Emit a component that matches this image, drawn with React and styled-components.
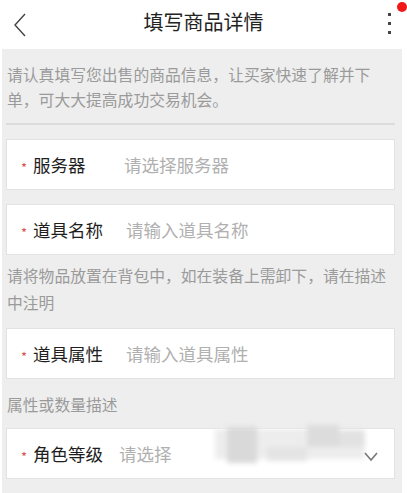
import React from 'react';
import styled, { createGlobalStyle } from 'styled-components';

const Global = createGlobalStyle`
    html, body {
        margin: 0;
        padding: 0;
        background: #fff;
        font-family: "Noto Sans CJK SC", "Noto Sans", sans-serif;
    }
`

const Page = styled.div`
    width: 407px;
    height: 493px;
    overflow: hidden;
    background: #fff;
`

const Header = styled.div`
    height: 49px;
    display: flex;
    align-items: center;
    justify-content: space-between;
    padding: 0 6px 0 12px;
    box-sizing: border-box;
    position: relative;
`

const Title = styled.div`
    position: absolute;
    left: 0;
    right: 0;
    top: 9px;
    text-align: center;
    font-size: 20px;
    line-height: 26px;
    color: #222;
    pointer-events: none;
`

const Menu = styled.div`
    position: relative;
    width: 24px;
    height: 36px;
    display: flex;
    flex-direction: column;
    align-items: center;
    justify-content: center;
    gap: 6px;
    margin-top: -3px;
`

const Dot = styled.span`
    width: 3px;
    height: 3px;
    background: #444;
`

const Badge = styled.span`
    position: absolute;
    top: -3px;
    right: -6px;
    width: 10px;
    height: 10px;
    border-radius: 50%;
    background: #f01818;
`

const Body = styled.div`
    margin: 0 5px 0 2px;
    background: #eeeeee;
    padding: 13px 7px 20px 4px;
    min-height: 444px;
    box-sizing: border-box;
`

const Note = styled.p`
    margin: ${p => p.$m || '0'};
    padding-left: 1px;
    font-size: 15.8px;
    line-height: ${p => p.$lh || 25}px;
    color: #9a9a9a;
`

const Divider = styled.div`
    height: 2px;
    background: #dcdcdc;
    margin: 11px 0 14px 0;
`

const Field = styled.div`
    position: relative;
    height: 51px;
    box-sizing: border-box;
    background: #fff;
    border: 1px solid #e2e2e2;
    display: flex;
    align-items: center;
    padding-left: 14px;
    margin-bottom: ${p => p.$mb || 0}px;
`

const Star = styled.span`
    color: #d9534f;
    font-size: 13px;
    line-height: 13px;
    width: 12px;
    margin-top: 6px;
`

const Label = styled.span`
    font-size: 17.5px;
    color: #1e1e1e;
    min-width: ${p => p.$w}px;
    margin-right: ${p => p.$gap}px;
`

const Placeholder = styled.span`
    font-size: 17.5px;
    color: #b0b0b0;
`

const Arrow = styled.svg`
    position: absolute;
    right: 16px;
    top: 23px;
`

const Blur = styled.div`
    position: absolute;
    left: 200px;
    top: -8px;
    width: 175px;
    height: 48px;
    filter: blur(2.5px);
`

const Block = styled.span`
    position: absolute;
    background: ${p => p.$c};
`

function Field_({ label, hint, w, gap, mb, children }) {
    return (
        <Field $mb={mb}>
            <Star>*</Star>
            <Label $w={w} $gap={gap}>{label}</Label>
            <Placeholder>{hint}</Placeholder>
            {children}
        </Field>
    );
}

export default function App() {
    const blocks = [
        { l: 8, t: 8, w: 150, h: 30, c: '#ededed' },
        { l: 20, t: 6, w: 30, h: 36, c: '#d9d9d9' },
        { l: 100, t: 4, w: 32, h: 22, c: '#dcdcdc' },
        { l: 60, t: 26, w: 40, h: 14, c: '#e4e4e4' },
        { l: 132, t: 10, w: 26, h: 16, c: '#e2e2e2' },
    ];
    return (
        <Page>
            <Global />
            <Header>
                <svg width="16" height="26" viewBox="0 0 16 26">
                    <path d="M13 2 L3 13 L13 24" fill="none" stroke="#444" strokeWidth="1.4" />
                </svg>
                <Title>填写商品详情</Title>
                <Menu>
                    <Dot /><Dot /><Dot />
                    <Badge />
                </Menu>
            </Header>
            <Body>
                <Note>请认真填写您出售的商品信息，让买家快速了解并下单，可大大提高成功交易机会。</Note>
                <Divider />
                <Field_ label="服务器" hint="请选择服务器" w={91} gap={0} mb={14} />
                <Field_ label="道具名称" hint="请输入道具名称" w={70} gap={23} />
                <Note $lh={27} $m="7px 0 12px 0">请将物品放置在背包中，如在装备上需卸下，请在描述中注明</Note>
                <Field_ label="道具属性" hint="请输入道具属性" w={70} gap={23} />
                <Note $lh={26} $m="13px 0 10px 0">属性或数量描述</Note>
                <Field_ label="角色等级" hint="请选择" w={70} gap={16}>
                    <Blur>
                        {blocks.map((b, i) => (
                            <Block key={i} $c={b.c} style={{ left: b.l, top: b.t, width: b.w, height: b.h }} />
                        ))}
                    </Blur>
                    <Arrow width="14" height="10" viewBox="0 0 14 10">
                        <path d="M1 1 L7 8 L13 1" fill="none" stroke="#777" strokeWidth="1.6" />
                    </Arrow>
                </Field_>
            </Body>
        </Page>
    );
}
